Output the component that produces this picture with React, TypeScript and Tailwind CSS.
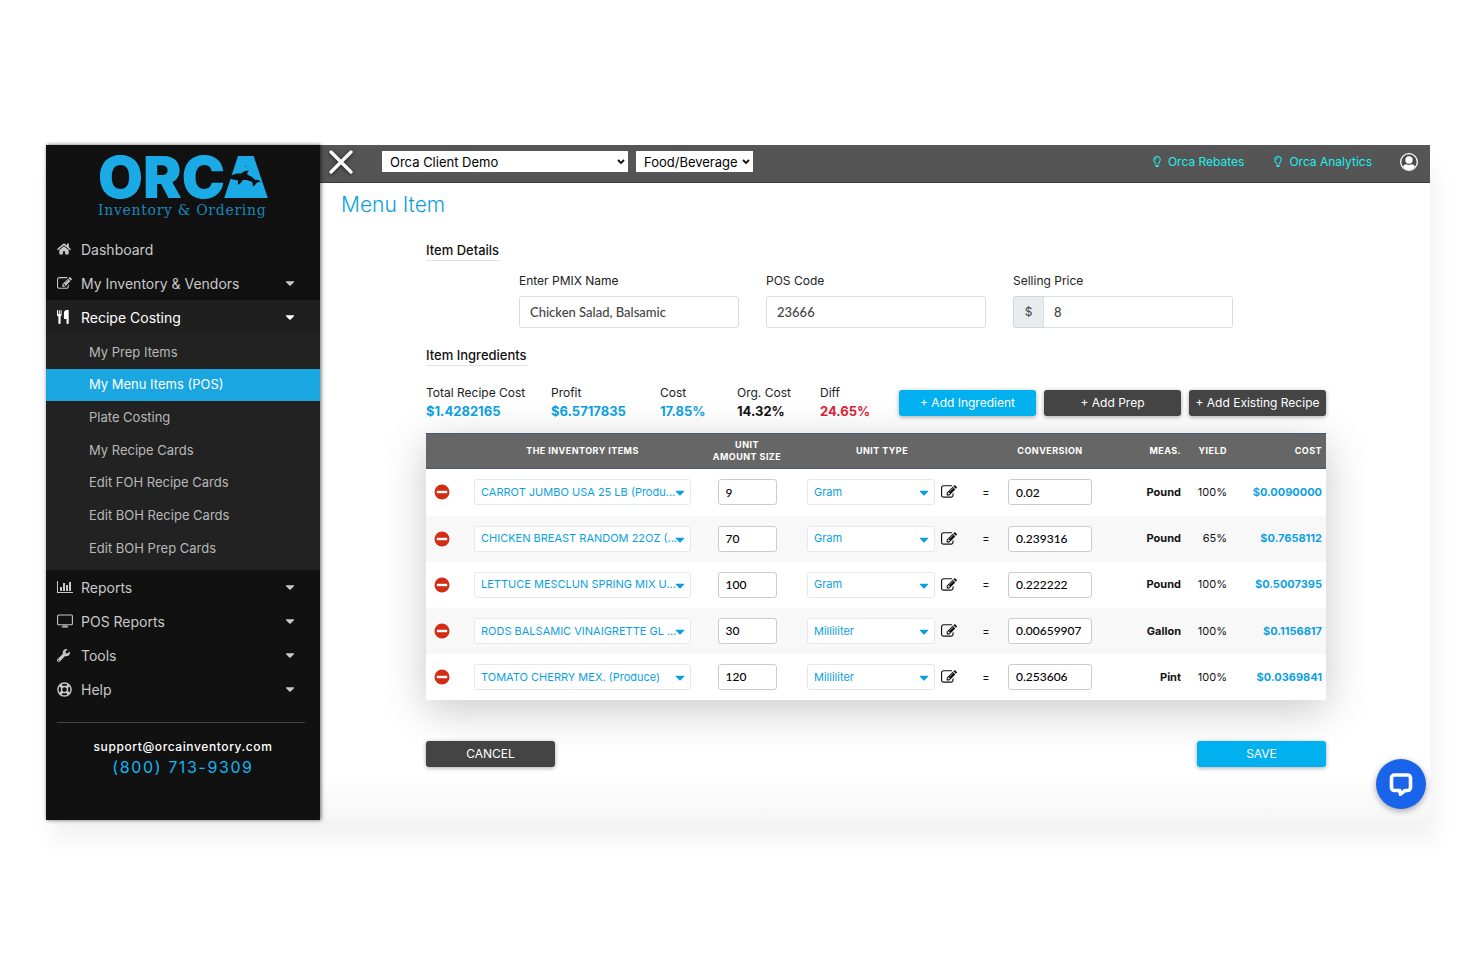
import type { ReactNode } from "react";
import {
  FaCaretDown,
  FaHome,
  FaRegLifeRing,
  FaRegLightbulb,
  FaWrench,
} from "react-icons/fa";

const ingredients = [
  { name: "CARROT JUMBO USA 25 LB (Produ...", amount: "9", unit: "Gram", conversion: "0.02", meas: "Pound", yieldPct: "100%", cost: "$0.0090000" },
  { name: "CHICKEN BREAST RANDOM 22OZ (...", amount: "70", unit: "Gram", conversion: "0.239316", meas: "Pound", yieldPct: "65%", cost: "$0.7658112" },
  { name: "LETTUCE MESCLUN SPRING MIX U...", amount: "100", unit: "Gram", conversion: "0.222222", meas: "Pound", yieldPct: "100%", cost: "$0.5007395" },
  { name: "RODS BALSAMIC VINAIGRETTE GL ...", amount: "30", unit: "Milliliter", conversion: "0.00659907", meas: "Gallon", yieldPct: "100%", cost: "$0.1156817" },
  { name: "TOMATO CHERRY MEX. (Produce)", amount: "120", unit: "Milliliter", conversion: "0.253606", meas: "Pint", yieldPct: "100%", cost: "$0.0369841" },
];

const recipeLinks = [
  "My Prep Items",
  "My Menu Items (POS)",
  "Plate Costing",
  "My Recipe Cards",
  "Edit FOH Recipe Cards",
  "Edit BOH Recipe Cards",
  "Edit BOH Prep Cards",
];

const EditIcon = ({ className }: { className: string }) => (
  <svg className={className} viewBox="0 0 1792 1792" fill="currentColor" aria-hidden="true">
    <path d="M888 1184l116-116-152-152-116 116v56h96v96h56zm440-720q-16-16-33 1l-350 350q-17 17-1 33t33-1l350-350q17-17 1-33zm80 594v190q0 119-84.5 203.5t-203.5 84.5h-832q-119 0-203.5-84.5t-84.5-203.5v-832q0-119 84.5-203.5t203.5-84.5h832q63 0 117 25 15 7 18 23 3 17-9 29l-49 49q-14 14-32 8-23-6-45-6h-832q-66 0-113 47t-47 113v832q0 66 47 113t113 47h832q66 0 113-47t47-113v-126q0-13 9-22l64-64q15-15 35-7t20 29zm-96-738l288 288-672 672h-288v-288zm444 132l-92 92-288-288 92-92q28-28 68-28t68 28l152 152q28 28 28 68t-28 68z" />
  </svg>
);

const CutleryIcon = () => (
  <svg className="h-[14px] w-3" viewBox="0 0 12 14" fill="currentColor" aria-hidden="true">
    <path d="M0 .5C0 .2.2 0 .5 0s.5.2.5.5V4h.8V.5c0-.3.2-.5.5-.5s.5.2.5.5V4h.8V.5c0-.3.2-.5.5-.5s.5.2.5.5v4.3c0 .8-.4 1.4-1 1.7V13c0 .6-.5 1-1.1 1-.6 0-1.1-.4-1.1-1V6.500C.4 6.200 0 5.600 0 4.800z" />
    <path d="M11.700.4V13c0 .6-.5 1-1.100 1s-1.100-.4-1.100-1V9H7.300a.4.4 0 0 1-.4-.4V3c0-1.700 1.300-3 3-3h1.400c.2 0 .4.200.4.400z" />
  </svg>
);

const ChartIcon = () => (
  <svg className="h-[14px] w-4" viewBox="0 0 2048 1792" fill="currentColor" aria-hidden="true">
    <path d="M640 896v512h-256v-512h256zm384-512v1024h-256v-1024h256zm1024 1152v128h-2048v-1536h128v1408h1920zm-640-896v768h-256v-768h256zm384-384v1152h-256v-1152h256z" />
  </svg>
);

const MonitorIcon = () => (
  <svg className="h-[14px] w-4" viewBox="0 0 16 14" fill="none" stroke="currentColor" strokeWidth="1.1" aria-hidden="true">
    <rect x=".6" y="1" width="14.800" height="9.800" rx="1" />
    <path d="M7 11v1.500M9 11v1.500M4.800 12.900h6.400" />
  </svg>
);

const Logo = () => (
  <a href="#home" className="relative mx-auto mt-[10px] block w-[170px] text-[#1aabe6]">
    <span className="block text-[58px] leading-[44px] font-black">ORCA</span>
    {/* whale jumping across the last letter */}
    <svg className="absolute top-0 left-[126px] h-11 w-11" viewBox="0 0 44 44" aria-hidden="true">
      <path d="M17 12h9l10 31H8z" fill="#1aabe6" />
      <path
        d="M5 23C7 19.500 12 18 17 18.500c2.500-2.300 5-3.200 8-3-1.500 1.300-2 2.700-1.500 4.300 3 1 5.500 2.700 7.500 5 2.500-.5 4.500.2 6 2-2.300 0-4 .6-5 1.700-.6 1.500-1.700 2.600-3.500 3 .4-1.800.3-3.200-.5-4.500-3-1.700-6-2.300-9-2-1.200 2.300-3 3.900-5.500 4.700.6-1.700.7-3.200.2-4.500C10.500 25 7.500 24.600 5 23z"
        fill="#111"
      />
    </svg>
    <span className="mt-[3px] block font-['DejaVu_Serif',serif] text-[14px] leading-4 tracking-wider whitespace-nowrap text-[#1787b8]">
      Inventory &amp; Ordering
    </span>
  </a>
);

type NavItemProps = {
  icon: ReactNode;
  label: string;
  caret?: boolean;
  active?: boolean;
};

const NavItem = ({ icon, label, caret = true, active = false }: NavItemProps) => (
  <a
    href="#nav"
    className={`flex h-[34px] items-center pr-6 pl-[11px] text-[14px] ${
      active ? "bg-[#1f1f1f] text-white" : "text-[#c8c8c8]"
    }`}
  >
    <span className="w-6">{icon}</span>
    <span>{label}</span>
    {caret && <FaCaretDown className="ml-auto h-[14px] w-3" />}
  </a>
);

const Sidebar = () => (
  <aside className="relative z-10 flex w-[274px] shrink-0 flex-col bg-[#111] pb-10 shadow-[1px_0_4px_rgba(0,0,0,0.6)]">
    <Logo />
    <nav className="mt-[14px]">
      <NavItem icon={<FaHome className="h-[14px] w-[14px]" />} label="Dashboard" caret={false} />
      <NavItem icon={<EditIcon className="h-[15px] w-[15px]" />} label="My Inventory & Vendors" />
      <NavItem icon={<CutleryIcon />} label="Recipe Costing" active />
      <div className="bg-[#222] pt-[2px] pb-[5px]">
        <ul className="flex h-[229px] flex-col">
          {recipeLinks.map((label) => (
            <li key={label} className="flex-1">
              <a
                href="#recipe"
                className={`flex h-full items-center pl-[43px] text-[13px] ${
                  label === "My Menu Items (POS)" ? "bg-[#1aa7e1] text-white" : "text-[#b8b8b8]"
                }`}
              >
                {label}
              </a>
            </li>
          ))}
        </ul>
      </div>
      <NavItem icon={<ChartIcon />} label="Reports" />
      <NavItem icon={<MonitorIcon />} label="POS Reports" />
      <NavItem icon={<FaWrench className="h-[13px] w-[13px]" />} label="Tools" />
      <NavItem icon={<FaRegLifeRing className="h-[15px] w-[15px]" />} label="Help" />
    </nav>
    <div className="mt-4 mr-[15px] ml-[11px] border-t border-[#444]" />
    <div className="mt-4 flex flex-col items-center text-center">
      <a href="mailto:support@orcainventory.com" className="text-[12px] leading-4 font-medium tracking-wider text-white">
        support@orcainventory.com
      </a>
      <a href="tel:8007139309" className="text-[16px] leading-6 tracking-widest text-[#12b5f0]">
        (800) 713-9309
      </a>
    </div>
  </aside>
);

const TopSelect = ({ label, value, className }: { label: string; value: string; className: string }) => (
  <div className={`relative ${className}`}>
    <select aria-label={label} className="block h-[21px] w-full appearance-none bg-white pl-2 text-[13px] leading-5 text-black">
      <option>{value}</option>
    </select>
    <svg className="pointer-events-none absolute top-2 right-[3px] h-[6px] w-2" viewBox="0 0 8 6" fill="none" stroke="#111" strokeWidth="1.800" aria-hidden="true">
      <path d="M1 1l3 3 3-3" />
    </svg>
  </div>
);

const TopBar = () => (
  <header className="flex h-[38px] items-center border-b border-[#3a3a3a] bg-[#555] pr-3 pb-1 pl-[9px]">
    <button type="button" aria-label="Close menu" className="drop-shadow-[0_1px_2px_rgba(0,0,0,0.6)]">
      <svg className="h-6 w-6" viewBox="0 0 24 24" fill="none" stroke="#fff" strokeWidth="3.200" strokeLinecap="round">
        <path d="M2 2l20 20M22 2L2 22" />
      </svg>
    </button>
    <TopSelect label="Client" value="Orca Client Demo" className="ml-[29px] w-[246px]" />
    <TopSelect label="Category" value="Food/Beverage" className="ml-2 w-[117px]" />
    <div className="ml-auto flex items-center text-[12px] text-[#1ff0ec]">
      <a href="#rebates" className="flex items-center gap-[6px]">
        <FaRegLightbulb className="h-[11px] w-[10px]" />
        Orca Rebates
      </a>
      <a href="#analytics" className="ml-[29px] flex items-center gap-[6px]">
        <FaRegLightbulb className="h-[11px] w-[10px]" />
        Orca Analytics
      </a>
      <button type="button" aria-label="Account" className="ml-7">
        <svg className="h-[18px] w-[18px]" viewBox="0 0 18 18">
          <circle cx="9" cy="9" r="8.300" fill="#4a4a4a" stroke="#fff" strokeWidth="1.300" />
          <circle cx="9" cy="7" r="3.700" fill="#fff" />
          <path d="M3 13.500c.6-1.600 1.900-2.300 3.500-2.300 1.500 1 3.500 1 5 0 1.600 0 2.900.7 3.500 2.300C13.600 15.800 11.500 17 9 17s-4.600-1.200-6-3.500z" fill="#fff" />
        </svg>
      </button>
    </div>
  </header>
);

const SectionTitle = ({ children }: { children: ReactNode }) => (
  <h2 className="w-fit border-b border-[#e2e2e8] text-[13px] leading-5 font-medium text-[#111]">
    {children}
  </h2>
);

const fieldClass =
  "h-8 w-full rounded-[3px] border border-[#d8dde3] bg-white px-[10px] font-[Lato,sans-serif] text-[13px] font-medium text-[#444]";

const ItemDetails = () => (
  <div className="mt-3 grid grid-cols-3 gap-[27px] px-[93px] text-[12px] leading-4 text-[#222]">
    <label>
      Enter PMIX Name
      <input className={`mt-[7px] block ${fieldClass}`} defaultValue="Chicken Salad, Balsamic" />
    </label>
    <label>
      POS Code
      <input className={`mt-[7px] block ${fieldClass}`} defaultValue="23666" />
    </label>
    <label>
      Selling Price
      <span className="mt-[7px] flex">
        <span className="flex w-[30px] shrink-0 items-center justify-center rounded-l-[3px] border border-r-0 border-[#d0d5db] bg-[#e9ecef] text-[#444]">
          $
        </span>
        <input className={`rounded-l-none ${fieldClass}`} defaultValue="8" />
      </span>
    </label>
  </div>
);

type StatProps = {
  label: string;
  value: string;
  width: string;
  color: string;
};

const Stat = ({ label, value, width, color }: StatProps) => (
  <div className={width}>
    <dt className="text-[12px] leading-4 whitespace-nowrap text-[#222]">{label}</dt>
    <dd className={`text-[13px] leading-[21px] font-bold ${color}`}>{value}</dd>
  </div>
);

const Button = ({ children, className }: { children: ReactNode; className: string }) => (
  <button
    type="button"
    className={`h-[26px] rounded-[3px] text-[12px] whitespace-nowrap text-white shadow-[0_1px_4px_rgba(0,0,0,0.35)] ${className}`}
  >
    {children}
  </button>
);

const CellSelect = ({ label, value, className }: { label: string; value: string; className: string }) => (
  <div className={`relative ${className}`}>
    <select
      aria-label={label}
      className="block h-[26px] w-full appearance-none rounded-[3px] border border-[#e4e7ec] bg-white pl-[6px] text-[11px] text-[#0c9fe0]"
    >
      <option>{value}</option>
    </select>
    <FaCaretDown className="pointer-events-none absolute top-[6px] right-[6px] h-[15px] w-[10px] text-[#0c9fe0]" />
  </div>
);

const cellInput =
  "h-[26px] rounded-[3px] border border-[#ccc] bg-white pl-[7px] font-[Lato,sans-serif] text-[12px] font-medium text-black";

const IngredientTable = () => (
  <table className="mt-[11px] h-[267px] w-full table-fixed bg-white text-[11px] text-[#111] shadow-[0_10px_40px_rgba(0,0,0,0.22)]">
    <colgroup>
      <col className="w-10" />
      <col />
      <col className="w-24" />
      <col className="w-[174px]" />
      <col className="w-[34px]" />
      <col className="w-[94px]" />
      <col className="w-[84px]" />
      <col className="w-[46px]" />
      <col className="w-[99px]" />
    </colgroup>
    <thead>
      <tr className="h-[35px] border-y border-[#4b5a75] bg-[#666] text-[9px] leading-3 tracking-wider whitespace-nowrap text-white">
        <th />
        <th>THE INVENTORY ITEMS</th>
        <th>
          UNIT
          <br />
          AMOUNT SIZE
        </th>
        <th>UNIT TYPE</th>
        <th />
        <th>CONVERSION</th>
        <th className="text-right">MEAS.</th>
        <th className="text-right">YIELD</th>
        <th className="pr-1 text-right">COST</th>
      </tr>
    </thead>
    <tbody>
      {ingredients.map((item) => (
        <tr key={item.name} className="even:bg-[#f8f8f8]">
          <td className="pl-2">
            <button type="button" aria-label="Remove ingredient" className="block">
              <svg className="h-4 w-4" viewBox="0 0 16 16">
                <circle cx="8" cy="8" r="7.500" fill="#d22d14" />
                <path d="M2.800 8h10.400" stroke="#fff" strokeWidth="2.400" />
              </svg>
            </button>
          </td>
          <td className="px-2">
            <CellSelect label="Inventory item" value={item.name} className="w-full" />
          </td>
          <td className="text-center">
            <input aria-label="Unit amount size" className={`w-[59px] ${cellInput}`} defaultValue={item.amount} />
          </td>
          <td>
            <div className="flex items-center justify-center gap-[6px]">
              <CellSelect label="Unit type" value={item.unit} className="w-[128px]" />
              <button type="button" aria-label="Edit unit">
                <EditIcon className="h-4 w-4" />
              </button>
            </div>
          </td>
          <td className="text-center">=</td>
          <td className="text-center">
            <input aria-label="Conversion" className={`w-[84px] ${cellInput}`} defaultValue={item.conversion} />
          </td>
          <td className="text-right font-bold">{item.meas}</td>
          <td className="text-right">{item.yieldPct}</td>
          <td className="pr-1 text-right font-bold text-[#0c9fe0]">{item.cost}</td>
        </tr>
      ))}
    </tbody>
  </table>
);

const MenuItemPage = () => (
  <main className="flex-1 bg-linear-to-b from-white from-93% to-[#f6f6f6] pt-2 pb-[53px]">
    <h1 className="pl-[21px] text-[21px] leading-7 font-light text-[#0c9fe0]">Menu Item</h1>
    <form className="mt-[21px] mr-[104px] ml-[106px]">
      <SectionTitle>Item Details</SectionTitle>
      <ItemDetails />
      <div className="mt-[17px]">
        <SectionTitle>Item Ingredients</SectionTitle>
      </div>
      <div className="mt-[19px] flex items-start justify-between">
        <dl className="flex">
          <Stat label="Total Recipe Cost" value="$1.4282165" width="w-[125px]" color="text-[#0c9fe0]" />
          <Stat label="Profit" value="$6.5717835" width="w-[109px]" color="text-[#0c9fe0]" />
          <Stat label="Cost" value="17.85%" width="w-[77px]" color="text-[#0c9fe0]" />
          <Stat label="Org. Cost" value="14.32%" width="w-[83px]" color="text-[#111]" />
          <Stat label="Diff" value="24.65%" width="w-[60px]" color="text-[#dc1e35]" />
        </dl>
        <div className="flex gap-2 pt-[5px]">
          <Button className="w-[137px] bg-[#00b0ef]">+ Add Ingredient</Button>
          <Button className="w-[137px] bg-[#444]">+ Add Prep</Button>
          <Button className="w-[137px] bg-[#444]">+ Add Existing Recipe</Button>
        </div>
      </div>
      <IngredientTable />
      <div className="mt-[41px] flex justify-between">
        <Button className="w-[129px] bg-[#444]">CANCEL</Button>
        <Button className="w-[129px] bg-[#00b0ef]">SAVE</Button>
      </div>
    </form>
  </main>
);

const App = () => (
  <div className="min-h-screen bg-white px-[46px] pt-[145px] pb-20 font-[Inter,sans-serif]">
    <div className="relative flex shadow-[6px_22px_20px_rgba(0,0,0,0.05)]">
      <Sidebar />
      <div className="flex min-w-0 flex-1 flex-col bg-white">
        <TopBar />
        <MenuItemPage />
      </div>
      <button
        type="button"
        aria-label="Open chat"
        className="absolute right-1 bottom-[11px] flex h-[50px] w-[50px] items-center justify-center rounded-full bg-[#1a64ec] shadow-[0_2px_6px_rgba(0,0,0,0.35)]"
      >
        <svg className="h-6 w-6" viewBox="0 0 24 24" fill="none" stroke="#fff" strokeWidth="3.600">
          <path d="M10.500 18.500H5.500a3 3 0 0 1-3-3v-9.500a3 3 0 0 1 3-3h13a3 3 0 0 1 3 3v9.500a3 3 0 0 1-3 3H16l-4.500 3.500z" strokeLinejoin="miter" />
        </svg>
      </button>
    </div>
  </div>
);

export default App;
